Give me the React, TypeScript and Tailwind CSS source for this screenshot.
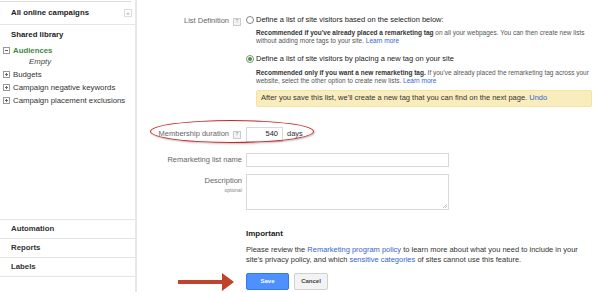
import React from "react";

const font = { fontFamily: '"Liberation Sans", Arial, sans-serif' };

function Help() {
  return (
    <span className="inline-flex h-[8px] w-[8px] items-center justify-center border border-[#ccc] bg-[#f3f3f3] text-[5px] leading-none text-[#999]">
      ?
    </span>
  );
}

function TreeBox({ open }: { open?: boolean }) {
  return (
    <span className="relative inline-block h-[7px] w-[7px] border border-[#999] bg-white">
      <span className="absolute left-[1px] top-[2px] h-[1px] w-[3px] bg-[#666]" />
      {!open && <span className="absolute left-[2px] top-[1px] h-[3px] w-[1px] bg-[#666]" />}
    </span>
  );
}

function Radio({ checked }: { checked?: boolean }) {
  return (
    <span className="inline-flex h-[8px] w-[8px] shrink-0 items-center justify-center rounded-full border border-[#888] bg-white">
      {checked && <span className="h-[4px] w-[4px] rounded-full bg-[#3c9a3c]" />}
    </span>
  );
}

function Sidebar() {
  return (
    <div className="flex h-[292px] w-[137px] shrink-0 flex-col border-r-2 border-[#e8e8e8] text-[7.8px] text-[#333]">
      <div className="mr-[4px] h-[2px] border-b border-[#ddd]" />
      <div className="flex h-[23px] items-center justify-between border-b border-[#e5e5e5] pl-[11px] pr-[3px]">
        <span className="font-bold text-[#222]">All online campaigns</span>
        <span className="flex h-[8px] w-[8px] items-center justify-center border border-[#ddd] text-[6px] leading-none text-[#999]">
          «
        </span>
      </div>
      <div className="mt-[4px] pl-[11px] font-bold text-[#222]">Shared library</div>
      <div className="mt-[3px] flex flex-col leading-[13px]">
        <div className="flex items-center gap-[3px] pl-[3px]">
          <TreeBox open />
          <span className="font-bold text-[#3d8a3d]">Audiences</span>
        </div>
        <div className="-mt-[2px] pl-[29px] italic text-[#444]">Empty</div>
        <div className="flex items-center gap-[3px] pl-[3px]">
          <TreeBox />
          <span>Budgets</span>
        </div>
        <div className="flex items-center gap-[3px] pl-[3px]">
          <TreeBox />
          <span>Campaign negative keywords</span>
        </div>
        <div className="flex items-center gap-[3px] pl-[3px]">
          <TreeBox />
          <span>Campaign placement exclusions</span>
        </div>
      </div>
      <div className="mt-auto mb-[15px] flex flex-col border-t border-[#e5e5e5] font-bold text-[#333]">
        {["Automation", "Reports", "Labels"].map((t) => (
          <div key={t} className="flex h-[19px] items-center border-b border-[#e5e5e5] pl-[11px]">
            {t}
          </div>
        ))}
      </div>
    </div>
  );
}

function Main() {
  const link = "text-[#3366cc]";
  return (
    <div className="relative flex-1 text-[7.5px] text-[#222]">
      <div className="ml-[76px] h-[2px] overflow-hidden">
        <div className={`-mt-[9px] leading-[10px] ${link}`}>Learn more about lists</div>
      </div>
      <div className="mt-[12px] grid grid-cols-[105px_1fr] gap-x-[4px]">
        <div className="flex items-start justify-end gap-[4px] pt-[1px] text-[#666]">
          <span>List Definition</span>
          <span className="mr-[1px]"><Help /></span>
        </div>
        <div className="pr-[8px]">
          <div className="flex items-center gap-[2px]">
            <Radio />
            <span>Define a list of site visitors based on the selection below:</span>
          </div>
          <div className="mt-[4px] pl-[10px] text-[6.5px] leading-[8px] text-[#555]">
            <span className="font-bold text-[#333]">Recommended if you've already placed a remarketing tag</span> on all your webpages. You can then create new lists without adding more tags to your site. <span className={link}>Learn more</span>
          </div>
          <div className="mt-[8px] flex items-center gap-[2px]">
            <Radio checked />
            <span>Define a list of site visitors by placing a new tag on your site</span>
          </div>
          <div className="mt-[4px] pl-[10px] text-[6.5px] leading-[8px] text-[#555]">
            <span className="font-bold text-[#333]">Recommended only if you want a new remarketing tag.</span> If you've already placed the remarketing tag across your website, select the other option to create new lists. <span className={link}>Learn more</span>
          </div>
          <div className="ml-[10px] mt-[5px] flex h-[17px] items-center rounded-[2px] border border-[#f5e3a0] bg-[#f9edbe] pl-[4px] text-[#333]">
            After you save this list, we'll create a new tag that you can find on the next page.&nbsp;<span className={link}>Undo</span>
          </div>
        </div>

        <div className="mt-[20px] flex items-center justify-end gap-[4px] text-[#666]">
          <span>Membership duration</span>
          <span className="mr-[1px]"><Help /></span>
        </div>
        <div className="mt-[20px] flex items-center gap-[4px]">
          <div className="flex h-[15px] w-[37px] items-center justify-end border border-[#d9d9d9] pr-[4px] text-[#222]">540</div>
          <span className="text-[#333]">days</span>
        </div>

        <div className="mt-[11px] flex items-center justify-end text-[#666]">Remarketing list name</div>
        <div className="mt-[11px] h-[14px] w-[203px] border border-[#d9d9d9]" />

        <div className="mt-[7px] flex flex-col items-end text-[#666]">
          <span className="mt-[1px]">Description</span>
          <span className="text-[5px] leading-[9px] text-[#888]">optional</span>
        </div>
        <div className="relative mt-[7px] h-[36px] w-[203px] border border-[#d9d9d9]">
          <svg className="absolute bottom-[1px] right-[1px]" width="5" height="5" viewBox="0 0 5 5">
            <path d="M1 5 L5 1 M3 5 L5 3" stroke="#aaa" strokeWidth="0.7" />
          </svg>
        </div>

        <div />
        <div className="mt-[18px]">
          <div className="text-[8px] font-bold text-[#222]">Important</div>
          <div className="mt-[5px] w-[336px] text-[7.5px] leading-[10px] text-[#333]">
            Please review the <span className={link}>Remarketing program policy</span> to learn more about what you need to include in your site's privacy policy, and which <span className={link}>sensitive categories</span> of sites cannot use this feature.
          </div>
          <div className="mt-[8px] flex gap-[5px]">
            <div className="flex h-[17px] w-[43px] items-center justify-center rounded-[2px] border border-[#3079ed] bg-[#4d90fe] text-[6px] font-bold text-white">Save</div>
            <div className="flex h-[17px] w-[34px] items-center justify-center rounded-[2px] border border-[#d0d0d0] bg-[#f3f3f3] text-[6px] font-bold text-[#444]">Cancel</div>
          </div>
        </div>
      </div>

      <div className="pointer-events-none absolute left-[13px] top-[120px] h-[23px] w-[164px] rounded-[50%] border-[1.5px] border-[#c8262b] shadow-[1px_1px_2px_rgba(0,0,0,0.25)]" />
      <svg className="pointer-events-none absolute left-[41px] top-[270px]" width="57" height="23" viewBox="0 0 57 23">
        <path d="M0 10 H44 V3 L56 12 L44 21 V14 H0 Z" fill="#c0432b" />
      </svg>
    </div>
  );
}

export default function App() {
  return (
    <div className="flex h-[292px] w-[600px] overflow-hidden bg-white" style={font}>
      <Sidebar />
      <Main />
    </div>
  );
}
